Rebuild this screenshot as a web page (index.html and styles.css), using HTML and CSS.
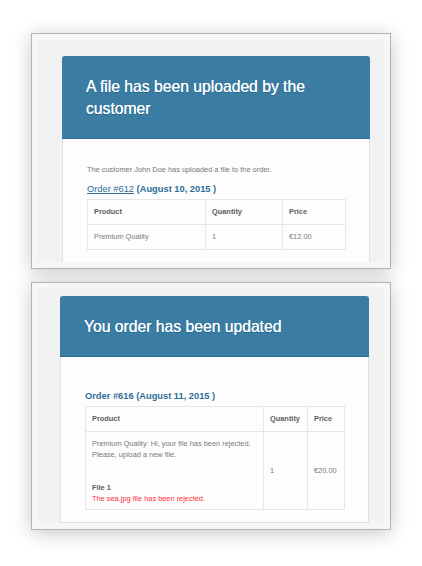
FILE: index.html
```html
<!DOCTYPE html>
<html lang="en">
<head>
<meta charset="utf-8">
<title>Emails</title>
<link rel="stylesheet" href="styles.css">
</head>
<body>
<main class="page">
  <section class="frame frame--first">
    <div class="viewport viewport--first">
      <div class="email email--first">
        <header class="email-head">
          <h1 class="email-title">A file has been uploaded by the customer</h1>
        </header>
        <div class="email-body email-body--first">
          <p class="intro">The customer John Doe has uploaded a file to the order.</p>
          <h2 class="order-title"><a class="order-link" href="#">Order #612</a> (August 10, 2015 )</h2>
          <table class="items items--first">
            <thead>
              <tr><th class="c-product">Product</th><th class="c-qty">Quantity</th><th class="c-price">Price</th></tr>
            </thead>
            <tbody>
              <tr><td>Premium Quality</td><td>1</td><td>€12.00</td></tr>
            </tbody>
          </table>
        </div>
      </div>
    </div>
  </section>

  <section class="frame frame--second">
    <div class="viewport viewport--second">
      <div class="email email--second">
        <header class="email-head">
          <h1 class="email-title">You order has been updated</h1>
        </header>
        <div class="email-body email-body--second">
          <h2 class="order-title">Order #616 (August 11, 2015 )</h2>
          <table class="items items--second">
            <thead>
              <tr><th class="c-product">Product</th><th class="c-qty">Quantity</th><th class="c-price">Price</th></tr>
            </thead>
            <tbody>
              <tr>
                <td class="cell-product">
                  <p class="note">Premium Quality: Hi, your file has been rejected.<br>Please, upload a new file.</p>
                  <p class="file-name">File 1</p>
                  <p class="file-status">The sea.jpg file has been rejected.</p>
                </td>
                <td>1</td>
                <td>€20.00</td>
              </tr>
            </tbody>
          </table>
        </div>
      </div>
    </div>
  </section>
</main>
</body>
</html>
```

FILE: styles.css
```css
* { box-sizing: border-box; }

html, body {
  margin: 0;
  padding: 0;
  background: #ffffff;
}

body {
  font-family: "Liberation Sans", Arial, sans-serif;
  width: 422px;
  height: 566px;
  overflow: hidden;
}

.page {
  display: flex;
  flex-direction: column;
  gap: 13px;
  padding: 33px 0 0 31px;
}

.frame {
  width: 360px;
  border: 1px solid #b3b3b3;
  background: #f6f6f6;
  padding: 6px;
  box-shadow: 0 3px 18px rgba(0, 0, 0, 0.22);
}

.frame--first { height: 236px; }
.frame--second { height: 248px; }

.viewport {
  background: #f2f2f2;
  overflow: hidden;
  height: 100%;
}

.viewport--first { padding: 16px 0 0 24px; }
.viewport--second { padding: 7px 0 0 22px; }

.email {
  width: 309px;
  background: #fdfdfd;
  border: 1px solid #e2e2e2;
  border-top: 0;
  border-radius: 3px 3px 0 0;
}

.email--first { width: 308px; }

.email-head {
  background: #3a7ca2;
  border-bottom: 1px solid #2a6c93;
  border-radius: 3px 3px 0 0;
  padding: 20px 24px 18px 24px;
  margin: 0 -1px;
}

.email-title {
  margin: 0;
  color: #ffffff;
  font-size: 15.7px;
  line-height: 22px;
  font-weight: normal;
  text-shadow: 0 0 0.4px #ffffff, 0 1px 0 rgba(0, 60, 100, 0.35);
}

.email-body {
  padding: 0 24px 12px 24px;
}

.email-body--first { padding-top: 25px; }
.email-body--second { padding-top: 33px; }

.intro {
  margin: 0 0 8px 0;
  font-size: 7.4px;
  line-height: 11px;
  color: #777777;
}

.order-title {
  margin: 0 0 4px 0;
  font-size: 9.3px;
  line-height: 12px;
  font-weight: bold;
  color: #2f6f98;
}

.order-link {
  color: #2f6f98;
  font-weight: normal;
  text-decoration: underline;
}

.items {
  border-collapse: collapse;
  table-layout: fixed;
  border: 1px solid #e6e6e6;
  font-size: 7.4px;
  line-height: 10px;
  color: #7a7a7a;
}

.items th,
.items td {
  border: 1px solid #e6e6e6;
  padding: 7px 6px;
  text-align: left;
  vertical-align: middle;
}

.items th {
  font-weight: bold;
  color: #606060;
}

.items--first { width: 258px; }
.items--first .c-product { width: 118px; }
.items--first .c-qty { width: 77px; }
.items--first .c-price { width: 63px; }

.items--second { width: 259px; }
.items--second .c-product { width: 178px; }
.items--second .c-qty { width: 44px; }
.items--second .c-price { width: 37px; }

.items td.cell-product {
  padding-top: 6px;
  padding-bottom: 5px;
}

.note {
  margin: 0 0 22px 0;
  line-height: 11px;
}

.file-name {
  margin: 0;
  line-height: 11px;
  font-weight: bold;
  color: #606060;
}

.file-status {
  margin: 0;
  line-height: 11px;
  color: #ff2b3a;
}
```
